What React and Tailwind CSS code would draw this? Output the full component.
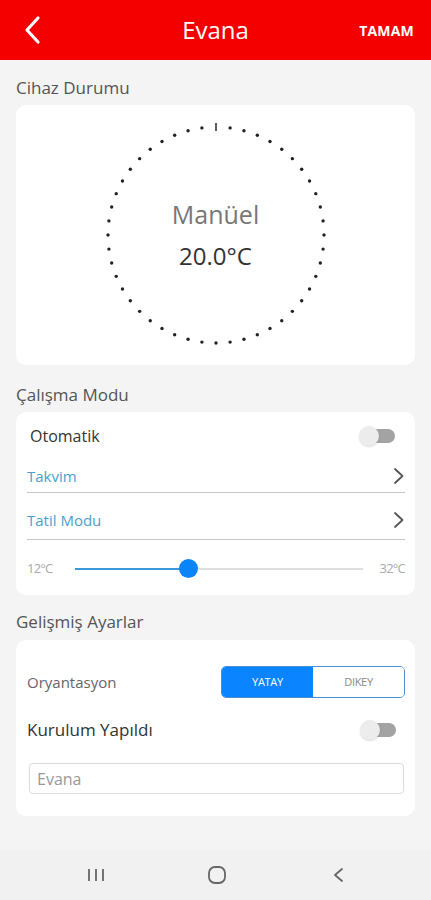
import React from 'react';

const font = { fontFamily: '"Open Sans", "Noto Sans", sans-serif' };

function DialRing() {
    const cx = 115, cy = 115, r = 108;
    const dots = [];
    for (let i = 1; i < 48; i++) {
        const a = (i / 48) * Math.PI * 2;
        dots.push(
            <circle key={i} cx={cx + r * Math.sin(a)} cy={cy - r * Math.cos(a)} r="1.7" fill="#222" />
        );
    }
    return (
        <svg width="230" height="230" viewBox="0 0 230 230" className="absolute inset-0">
            <line x1={cx} y1={cy - r - 4} x2={cx} y2={cy - r + 4} stroke="#333" strokeWidth="1.6" />
            {dots}
        </svg>
    );
}

function Toggle() {
    return (
        <div className="relative w-[36px] h-[20px] flex items-center">
            <div className="ml-[6px] w-[30px] h-[14px] rounded-full bg-[#a3a3a3]" />
            <div className="absolute left-0 top-0 w-[20px] h-[20px] rounded-full bg-[#ececec] shadow-[0_1px_2px_rgba(0,0,0,0.15)]" />
        </div>
    );
}

function Chevron() {
    return (
        <svg width="12" height="18" viewBox="0 0 12 18">
            <path d="M2 2 L9.5 9 L2 16" fill="none" stroke="#555" strokeWidth="1.8" strokeLinecap="round" strokeLinejoin="round" />
        </svg>
    );
}

function SectionTitle({ children, className }) {
    return (
        <div className={`px-[16px] text-[17px] leading-[22px] text-[#555] ${className}`}>{children}</div>
    );
}

export default function App() {
    return (
        <div className="w-[431px] h-[900px] flex flex-col bg-[#f4f4f4] overflow-hidden" style={font}>
            {/* Header */}
            <div className="h-[60px] bg-[#f50000] flex items-center justify-between px-[17px] relative">
                <svg width="24" height="30" viewBox="0 0 24 30" className="ml-[4px]">
                    <path d="M17 3 L6 15 L17 27" fill="none" stroke="#fff" strokeWidth="3.2" strokeLinecap="round" strokeLinejoin="round" />
                </svg>
                <div className="absolute left-0 right-0 text-center text-white text-[24px] leading-[30px] pointer-events-none">Evana</div>
                <div className="text-white font-bold text-[14px] tracking-[0.2px]">TAMAM</div>
            </div>

            {/* Cihaz Durumu */}
            <SectionTitle className="pt-[17px] pb-[6px]">Cihaz Durumu</SectionTitle>
            <div className="mx-[16px] h-[260px] bg-white rounded-[10px] flex items-center justify-center">
                <div className="relative w-[230px] h-[230px] flex flex-col items-center justify-center">
                    <DialRing />
                    <div className="text-[25px] leading-[32px] text-[#777]">Manüel</div>
                    <div className="text-[24px] leading-[32px] text-[#333] mt-[10px]">20.0°C</div>
                </div>
            </div>

            {/* Çalışma Modu */}
            <SectionTitle className="pt-[19px] pb-[6px]">Çalışma Modu</SectionTitle>
            <div className="mx-[16px] bg-white rounded-[10px] pl-[11px] pr-[10px]">
                <div className="h-[48px] flex items-center justify-between pl-[3px] pr-[10px]">
                    <span className="text-[16px] text-[#333]">Otomatik</span>
                    <Toggle />
                </div>
                <div className="h-[33px] flex items-center justify-between border-b border-[#c8c8c8]">
                    <span className="text-[15px] text-[#4a9fd0]">Takvim</span>
                    <Chevron />
                </div>
                <div className="h-[47px] pt-[8px] flex items-center justify-between border-b border-[#c8c8c8]">
                    <span className="text-[15px] text-[#4a9fd0]">Tatil Modu</span>
                    <Chevron />
                </div>
                <div className="h-[55px] pt-[3px] flex items-center">
                    <span className="text-[13px] text-[#aaa] tracking-[-0.8px] w-[48px]">12°C</span>
                    <div className="relative flex-1 h-[2px] bg-[#dedede] mr-[17px]">
                        <div className="absolute left-0 top-0 h-[2px] w-[113px] bg-[#3d98dd]" />
                        <div className="absolute left-[104px] top-[-9px] w-[19px] h-[19px] rounded-full bg-[#0a84f6]" />
                    </div>
                    <span className="text-[13px] text-[#aaa] tracking-[-0.8px]">32°C</span>
                </div>
            </div>

            {/* Gelişmiş Ayarlar */}
            <SectionTitle className="pt-[16px] pb-[7px]">Gelişmiş Ayarlar</SectionTitle>
            <div className="mx-[16px] bg-white rounded-[10px] pl-[11px] pr-[10px] pt-[26px] pb-[22px]">
                <div className="h-[32px] flex items-center justify-between">
                    <span className="text-[15px] text-[#666]">Oryantasyon</span>
                    <div className="w-[184px] h-[32px] flex rounded-[5px] border border-[#4a90d9] overflow-hidden">
                        <div className="flex-1 bg-[#0a84ff] flex items-center justify-center text-white text-[11px] tracking-[-0.3px]">YATAY</div>
                        <div className="flex-1 bg-white flex items-center justify-center text-[#888] text-[11px] tracking-[-0.3px]">DIKEY</div>
                    </div>
                </div>
                <div className="h-[32px] mt-[16px] flex items-center justify-between pr-[9px]">
                    <span className="text-[17px] text-[#333]">Kurulum Yapıldı</span>
                    <Toggle />
                </div>
                <div className="mt-[17px] ml-[2px] mr-[1px] h-[31px] border border-[#dcdcdc] rounded-[4px] flex items-center px-[7px]">
                    <span className="text-[16px] text-[#999]">Evana</span>
                </div>
            </div>

            <div className="flex-1" />

            {/* Nav bar */}
            <div className="h-[50px] bg-[#f1f1f1] flex items-center pl-[87px]">
                <svg width="18" height="16" viewBox="0 0 18 16">
                    <path d="M2 2 V14 M9 2 V14 M16 2 V14" stroke="#666" strokeWidth="1.8" />
                </svg>
                <svg width="20" height="20" viewBox="0 0 20 20" className="ml-[102px]">
                    <rect x="2" y="2" width="16" height="16" rx="6" fill="none" stroke="#666" strokeWidth="1.8" />
                </svg>
                <svg width="14" height="18" viewBox="0 0 14 18" className="ml-[103px]">
                    <path d="M12 3 L5 9 L12 15" fill="none" stroke="#666" strokeWidth="1.8" strokeLinecap="round" strokeLinejoin="round" />
                </svg>
            </div>
        </div>
    );
}
